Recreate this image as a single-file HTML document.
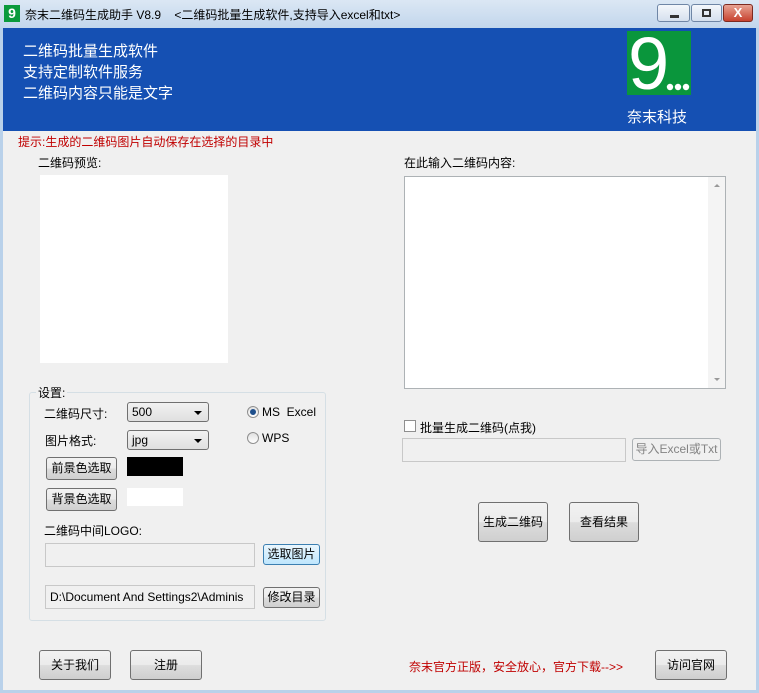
<!DOCTYPE html>
<html><head><meta charset="utf-8"><style>
*{box-sizing:border-box;margin:0;padding:0}
body{width:759px;height:693px;overflow:hidden;font-family:"Liberation Sans","Noto Sans CJK SC",sans-serif;font-size:12px;color:#000;background:#b9d1ea;position:relative}
.a{position:absolute}
.btn{position:absolute;border:1px solid #707070;border-radius:3px;background:linear-gradient(#f2f2f2,#ebebeb 50%,#dddddd 51%,#cfcfcf);text-align:center;font-size:12px}
.tb{position:absolute;background:#f0f0f0;border:1px solid #c8c8c8}
.sel{position:absolute;border:1px solid #707070;border-radius:3px;background:linear-gradient(#f2f2f2,#e0e0e0);padding-left:4px;font-size:12px;line-height:18px}
.sel:after{content:"";position:absolute;right:6px;top:8px;border-left:4px solid transparent;border-right:4px solid transparent;border-top:4px solid #000}
.radio{position:absolute;width:12px;height:12px;border-radius:50%;border:1px solid #8f8f8f;background:linear-gradient(#e0e0e0,#fff)}
</style></head><body>
<div class="a" style="left:0;top:0;width:759px;height:28px;background:linear-gradient(#dbe7f4,#c2d6ec)"></div>
<div class="a" style="left:4px;top:5px;width:16px;height:17px;background:#0a9a3c;color:#fff;font-size:14px;line-height:16px;text-align:center;font-weight:bold">9</div>
<div class="a" style="left:25px;top:6px;font-size:12px">奈末二维码生成助手 V8.9 &nbsp;&nbsp;&nbsp;&lt;二维码批量生成软件,支持导入excel和txt&gt;</div>
<div class="a" style="left:657px;top:4px;width:33px;height:18px;border:1px solid #6f86a6;border-radius:3px;background:linear-gradient(#f4f7fb,#d5e0ee)"><div class="a" style="left:12px;top:10px;width:9px;height:3px;background:#333"></div></div>
<div class="a" style="left:691px;top:4px;width:31px;height:18px;border:1px solid #6f86a6;border-radius:3px;background:linear-gradient(#f4f7fb,#d5e0ee)"><div class="a" style="left:10px;top:4px;width:9px;height:8px;border:2px solid #333"></div></div>
<div class="a" style="left:723px;top:4px;width:30px;height:18px;border:1px solid #7d2a20;border-radius:3px;background:linear-gradient(#e8a393,#c7422f);color:#fff;font-weight:bold;text-align:center;line-height:16px;font-size:13px">X</div>
<div class="a" style="left:3px;top:28px;width:753px;height:662px;background:#f0f0f0"></div>
<div class="a" style="left:3px;top:28px;width:753px;height:103px;background:#1550b3"></div>
<div class="a" style="left:23px;top:41px;color:#fff;font-size:15px;line-height:21px">二维码批量生成软件<br>支持定制软件服务<br>二维码内容只能是文字</div>
<svg class="a" style="left:627px;top:31px" width="64" height="64" viewBox="0 0 64 64"><rect width="64" height="64" fill="#0a963c"/><text x="1" y="58" fill="#fff" font-family="Liberation Sans" font-size="74">9</text><circle cx="43" cy="56" r="3.2" fill="#fff"/><circle cx="51" cy="56" r="3.2" fill="#fff"/><circle cx="59" cy="56" r="3.2" fill="#fff"/></svg>
<div class="a" style="left:627px;top:106px;color:#fff;font-size:15px">奈末科技</div>
<div class="a" style="left:18px;top:133px;color:#c00000">提示:生成的二维码图片自动保存在选择的目录中</div>
<div class="a" style="left:38px;top:154px">二维码预览:</div>
<div class="a" style="left:40px;top:175px;width:188px;height:188px;background:#fff"></div>
<div class="a" style="left:404px;top:154px">在此输入二维码内容:</div>
<div class="a" style="left:404px;top:176px;width:322px;height:213px;background:#fff;border:1px solid #adb2b5"><div class="a" style="right:0;top:0;width:17px;height:211px;background:#f4f4f4"></div><div class="a" style="right:5px;top:7px;border-left:3px solid transparent;border-right:3px solid transparent;border-bottom:3px solid #999"></div><div class="a" style="right:5px;bottom:7px;border-left:3px solid transparent;border-right:3px solid transparent;border-top:3px solid #999"></div></div>
<div class="a" style="left:29px;top:392px;width:297px;height:229px;border:1px solid #d5dfe5;border-radius:3px"></div>
<div class="a" style="left:36px;top:384px;background:#f0f0f0;padding:0 2px">设置:</div>
<div class="a" style="left:44px;top:405px">二维码尺寸:</div>
<div class="sel" style="left:127px;top:402px;width:82px;height:20px">500</div>
<div class="a" style="left:45px;top:432px">图片格式:</div>
<div class="sel" style="left:127px;top:430px;width:82px;height:20px">jpg</div>
<div class="radio" style="left:247px;top:406px"><div class="a" style="left:2px;top:2px;width:6px;height:6px;border-radius:50%;background:#1e4f8c"></div></div>
<div class="a" style="left:262px;top:405px">MS&nbsp; Excel</div>
<div class="radio" style="left:247px;top:432px"></div>
<div class="a" style="left:262px;top:431px">WPS</div>
<div class="btn" style="left:46px;top:457px;width:71px;height:23px;line-height:21px">前景色选取</div>
<div class="a" style="left:127px;top:457px;width:56px;height:19px;background:#000"></div>
<div class="btn" style="left:46px;top:488px;width:71px;height:23px;line-height:21px">背景色选取</div>
<div class="a" style="left:127px;top:488px;width:56px;height:18px;background:#fff"></div>
<div class="a" style="left:44px;top:522px">二维码中间LOGO:</div>
<div class="tb" style="left:45px;top:543px;width:210px;height:24px"></div>
<div class="btn" style="left:263px;top:544px;width:57px;height:21px;line-height:19px;border-color:#3c7fb1;background:linear-gradient(#eaf6fd,#bee6fd)">选取图片</div>
<div class="tb" style="left:45px;top:585px;width:210px;height:24px;padding-left:4px;line-height:22px;overflow:hidden;white-space:nowrap">D:\Document And Settings2\Adminis</div>
<div class="btn" style="left:263px;top:587px;width:57px;height:21px;line-height:19px">修改目录</div>
<div class="a" style="left:404px;top:420px;width:12px;height:12px;border:1px solid #8f8f8f;background:#fff"></div>
<div class="a" style="left:420px;top:419px">批量生成二维码(点我)</div>
<div class="tb" style="left:402px;top:438px;width:224px;height:24px"></div>
<div class="a" style="left:632px;top:438px;width:89px;height:23px;border:1px solid #adb2b5;border-radius:3px;color:#838383;text-align:center;line-height:21px">导入Excel或Txt</div>
<div class="btn" style="left:478px;top:502px;width:70px;height:40px;line-height:38px">生成二维码</div>
<div class="btn" style="left:569px;top:502px;width:70px;height:40px;line-height:38px">查看结果</div>
<div class="btn" style="left:39px;top:650px;width:72px;height:30px;line-height:28px">关于我们</div>
<div class="btn" style="left:130px;top:650px;width:72px;height:30px;line-height:28px">注册</div>
<div class="a" style="left:409px;top:658px;color:#c00000">奈末官方正版，安全放心，官方下载--&gt;&gt;</div>
<div class="btn" style="left:655px;top:650px;width:72px;height:30px;line-height:28px">访问官网</div>
</body></html>
